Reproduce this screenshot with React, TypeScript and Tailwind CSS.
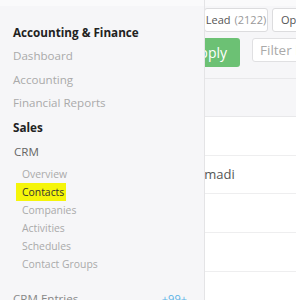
import React from "react";

const topItems = ["Dashboard", "Accounting", "Financial Reports"];
const crmItems = ["Overview", "Contacts", "Companies", "Activities", "Schedules", "Contact Groups"];

const font = "font-['Open_Sans',_'Noto_Sans',_sans-serif]";

const Sidebar: React.FC = () => (
  <aside className={`absolute left-0 top-0 h-full w-[205px] bg-[#f6f6f8] border-r border-[#e4e4e6] ${font}`}>
    <div className="h-[6px] bg-[#fafafb]" />
    <div className="pt-[14px] pl-[13px] pr-[17px]">
      <div className="h-[24px] leading-[24px] text-[11.7px] font-bold text-[#222]">Accounting &amp; Finance</div>
      {topItems.map((t) => (
        <div key={t} className="h-[23.5px] leading-[23.5px] text-[11.6px] text-[#aaa]">
          {t}
        </div>
      ))}
      <div className="h-[24px] leading-[24px] text-[11.7px] font-bold text-[#222]">Sales</div>
      <div className="h-[25px] leading-[25px] text-[11.6px] text-[#666] pl-[1px]">CRM</div>
      <div className="mt-[1px]">
        {crmItems.map((t) => (
          <div key={t} className="h-[18px] leading-[18px] text-[10.4px]">
            {t === "Contacts" ? (
              <span className="ml-[3px] pl-[6px] pr-[2px] py-[2px] bg-[#f5f50a] text-[#333]">{t}</span>
            ) : (
              <span className="pl-[9px] text-[#aaa]">{t}</span>
            )}
          </div>
        ))}
      </div>
      <div className="mt-[16px] flex justify-between h-[20px] leading-[20px] text-[11.6px]">
        <span className="text-[#888]">CRM Entries</span>
        <span className="text-[11px] text-[#5bb3e6]">+99+</span>
      </div>
    </div>
  </aside>
);

const Main: React.FC = () => (
  <div className={`${font}`}>
    <div className="h-[6px] bg-[#fafafb]" />
    <div className="flex gap-[4px] pl-[204px] pt-[2px]">
      <div className="h-[24px] w-[64px] shrink-0 flex items-center justify-center rounded-[3px] border border-[#dcdcde] bg-white text-[11px] text-[#555]">
        Lead <span className="ml-[4px] text-[#999]">(2122)</span>
      </div>
      <div className="h-[24px] w-[80px] shrink-0 flex items-center pl-[8px] rounded-[3px] border border-[#dcdcde] bg-white text-[11px] text-[#555]">
        Opportunity
      </div>
    </div>
    <div className="flex items-start pl-[150px] pt-[6px]">
      <div className="h-[29px] w-[90px] shrink-0 flex items-center justify-end pr-[13px] rounded-[3px] bg-[#6cc174] text-[14px] text-white">
        Apply
      </div>
      <div className="ml-[12px] h-[24px] w-[120px] shrink-0 flex items-center pl-[7px] rounded-[3px] border border-[#e0e0e2] bg-white text-[13.5px] text-[#aaa]">
        Filter by name
      </div>
    </div>
    <div className="mt-[11px] border-t border-[#e8e8ea] h-[38px]" />
    <div className="bg-white border-t border-[#e8e8ea]">
      <div className="h-[39px] border-b border-[#eeeeef]" />
      <div className="h-[38px] border-b border-[#eeeeef] flex items-center pl-[188px] text-[13px] text-[#555]">
        Ahmadi
      </div>
      <div className="h-[39px] border-b border-[#eeeeef]" />
      <div className="h-[39px] border-b border-[#eeeeef]" />
      <div className="h-[39px]" />
    </div>
  </div>
);

export default function App() {
  return (
    <div className="relative w-[296px] h-[300px] overflow-hidden bg-[#f6f6f8]">
      <Main />
      <Sidebar />
    </div>
  );
}
